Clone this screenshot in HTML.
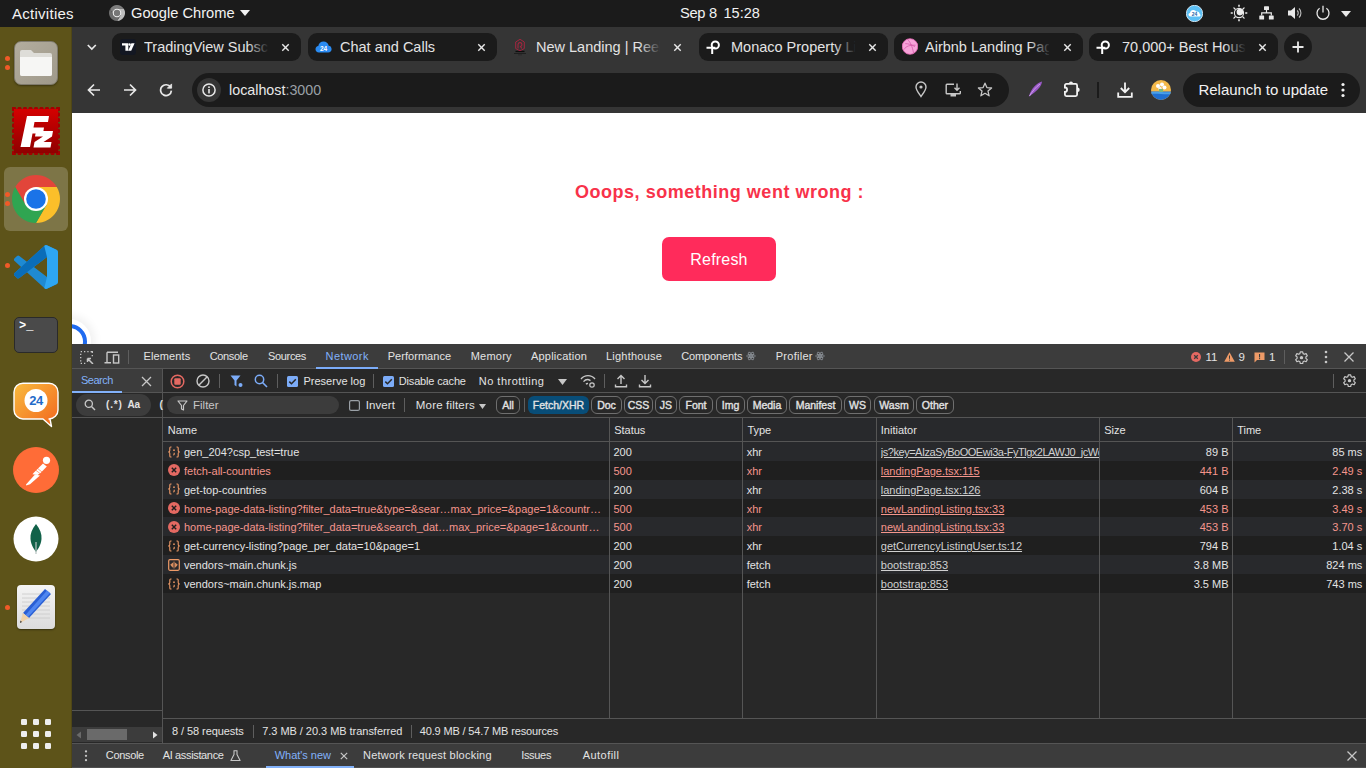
<!DOCTYPE html>
<html><head><meta charset="utf-8">
<style>
*{box-sizing:border-box;margin:0;padding:0}
html,body{width:1366px;height:768px;overflow:hidden;background:#1b1b1b;font-family:"Liberation Sans",sans-serif}
.a{position:absolute}
.t{position:absolute;white-space:nowrap}
#top{left:0;top:0;width:1366px;height:27px;background:#1b1b1b;color:#f2f2f2;font-size:15px}
#dock{left:0;top:27px;width:72px;height:741px;background:#5d5319}
#tabs{left:72px;top:27px;width:1294px;height:46px;background:#353535}
.tab{position:absolute;top:6px;height:28px;width:189px;border-radius:9px;background:#1b1b1b;color:#e3e3e3;font-size:14.5px}
.tab .tt{position:absolute;left:31px;top:6px;white-space:nowrap;overflow:hidden;width:124px}
.tab .fade{position:absolute;left:135px;top:0;width:22px;height:28px;background:linear-gradient(90deg,rgba(27,27,27,0),#1b1b1b)}
.tab .x{position:absolute;left:168px;top:8.5px;width:11px;height:11px}
#toolbar{left:72px;top:72px;width:1294px;height:41px;background:#353535}
#page{left:72px;top:113px;width:1294px;height:231px;background:#fff;overflow:hidden}
#dt{left:72px;top:344px;width:1294px;height:424px;background:#282828;color:#e3e3e3;font-size:11px;overflow:hidden}
</style></head>
<body>
<!-- Ubuntu top bar -->
<div id="top" class="a">
  <div class="t" style="left:12px;top:5px;letter-spacing:0.27px">Activities</div>
  <svg class="a" style="left:109px;top:5px" width="16" height="16" viewBox="-8 -8 16 16"><path d="M-6.75 -4.30A8 8 0 0 1 6.75 -4.30L0.00 -4.30L0 0L-3.72 2.15Z" fill="#7d7d7d"/><path d="M6.75 -4.30A8 8 0 0 1 0.00 8.00L3.72 2.15L0 0L0.00 -4.30Z" fill="#bdbdbd"/><path d="M0.00 8.00A8 8 0 0 1 -6.75 -4.30L-3.72 2.15L0 0L3.72 2.15Z" fill="#6c6c6c"/><circle r="4.3" fill="#f0f0f0"/><circle r="3.2" fill="#767676"/></svg>
  <div class="t" style="left:131px;top:5px;font-size:14.7px">Google Chrome</div>
  <svg class="a" style="left:240px;top:10px" width="10" height="6" viewBox="0 0 10 6"><path d="M0 0H10L5 6Z" fill="#f2f2f2"/></svg>
  <div class="t" style="left:680px;top:5px;font-size:14.7px;letter-spacing:-0.3px">Sep 8</div><div class="t" style="left:723.5px;top:4.5px;font-size:14.5px;letter-spacing:0px">15:28</div>
  <svg class="a" style="left:1186px;top:5px" width="17" height="17" viewBox="0 0 17 17"><circle cx="8.5" cy="8.5" r="8.2" fill="#5cc0f5"/><circle cx="8.5" cy="8.5" r="8.2" fill="none" stroke="#e8f6ff" stroke-width="0.8"/><path d="M4.5 11.5C3.2 11.5 2.5 10.6 2.5 9.6C2.5 8.7 3.1 8 4 7.9C4.2 6.2 5.6 5 7.3 5C8.6 5 9.7 5.7 10.2 6.8C10.5 6.7 10.8 6.6 11.2 6.6C12.6 6.6 13.6 7.6 13.7 8.9C14.2 9.1 14.5 9.6 14.5 10.2C14.5 11 13.9 11.5 13 11.5Z" fill="#fff"/><text x="8.5" y="10.6" font-size="5" font-weight="700" fill="#1a5fa8" text-anchor="middle" font-family="Liberation Sans">24</text></svg>
  <svg class="a" style="left:1230px;top:4px" width="18" height="18" viewBox="-1 -1 18 18"><g stroke="#e8e8e8" stroke-width="1.3"><path d="M8 -0.3V1.8M8 14.2V16.3M-0.3 8H1.8M14.2 8H16.3" stroke-width="1.6"/><path d="M2.9 2.9L4 4M12 12L13.1 13.1M2.9 13.1L4 12M12 4L13.1 2.9" stroke-linecap="round"/></g><circle cx="8" cy="8" r="4.6" stroke="#e8e8e8" stroke-width="1.1" fill="none"/><circle cx="8.9" cy="7.1" r="3.3" fill="#ececec"/></svg>
  <svg class="a" style="left:1259px;top:5.5px" width="15" height="14" viewBox="0 0 15 14"><rect x="5" y="0.3" width="5" height="3.7" rx="0.6" fill="#e8e8e8"/><rect x="0.3" y="9.5" width="4.8" height="4" rx="0.6" fill="#e8e8e8"/><rect x="9.9" y="9.5" width="4.8" height="4" rx="0.6" fill="#e8e8e8"/><path d="M7.5 4V6.8M2.7 9.5V6.8H12.3V9.5" stroke="#e8e8e8" stroke-width="1.2" fill="none"/></svg>
  <svg class="a" style="left:1287px;top:4.5px" width="16" height="16" viewBox="0 0 16 16"><path d="M1 5.5H4L8 2V14L4 10.5H1Z" fill="#e8e8e8"/><path d="M10.2 5.5A3.5 3.5 0 0 1 10.2 10.5M12 3.5A6.2 6.2 0 0 1 12 12.5" stroke="#e8e8e8" stroke-width="1.1" fill="none" opacity="0.8"/></svg>
  <svg class="a" style="left:1315px;top:4.5px" width="16" height="16" viewBox="0 0 16 16"><path d="M4.6 3.3A6 6 0 1 0 11.4 3.3" stroke="#e8e8e8" stroke-width="1.3" fill="none"/><path d="M8 0.8V7.5" stroke="#e8e8e8" stroke-width="1.3"/></svg>
  <svg class="a" style="left:1341px;top:11px" width="10" height="6" viewBox="0 0 10 6"><path d="M0 0H10L5 6Z" fill="#e8e8e8"/></svg>
</div>
<div id="dock" class="a">
  <!-- files -->
  <div class="a" style="left:5px;top:29px;width:5px;height:5px;border-radius:3px;background:#f05a28"></div>
  <div class="a" style="left:5px;top:38px;width:5px;height:5px;border-radius:3px;background:#f05a28"></div>
  <div class="a" style="left:14px;top:14px;width:44px;height:44px;border-radius:7px;background:linear-gradient(135deg,#b3ad9e,#9f998a);border:1px solid #7f7a6c;box-shadow:0 1px 2px rgba(0,0,0,.35)"></div>
  <svg class="a" style="left:19px;top:22px" width="34" height="28" viewBox="0 0 34 28"><path d="M1 3A2 2 0 0 1 3 1H12L15 4H31A2 2 0 0 1 33 6V25A2 2 0 0 1 31 27H3A2 2 0 0 1 1 25Z" fill="#deddd8"/><path d="M1 8H33V25A2 2 0 0 1 31 27H3A2 2 0 0 1 1 25Z" fill="#f6f6f4"/></svg>
  <!-- filezilla -->
  <svg class="a" style="left:12px;top:80px" width="48" height="48" viewBox="0 0 48 48"><defs><linearGradient id="fzg" x1="0" y1="0" x2="0" y2="1"><stop offset="0" stop-color="#d40000"/><stop offset="1" stop-color="#8f0000"/></linearGradient></defs><g fill="#a30000"><circle cx="2.0" cy="2" r="2.2"/><circle cx="2.0" cy="46" r="2.2"/><circle cx="2" cy="2.0" r="2.2"/><circle cx="46" cy="2.0" r="2.2"/><circle cx="7.5" cy="2" r="2.2"/><circle cx="7.5" cy="46" r="2.2"/><circle cx="2" cy="7.5" r="2.2"/><circle cx="46" cy="7.5" r="2.2"/><circle cx="13.0" cy="2" r="2.2"/><circle cx="13.0" cy="46" r="2.2"/><circle cx="2" cy="13.0" r="2.2"/><circle cx="46" cy="13.0" r="2.2"/><circle cx="18.5" cy="2" r="2.2"/><circle cx="18.5" cy="46" r="2.2"/><circle cx="2" cy="18.5" r="2.2"/><circle cx="46" cy="18.5" r="2.2"/><circle cx="24.0" cy="2" r="2.2"/><circle cx="24.0" cy="46" r="2.2"/><circle cx="2" cy="24.0" r="2.2"/><circle cx="46" cy="24.0" r="2.2"/><circle cx="29.5" cy="2" r="2.2"/><circle cx="29.5" cy="46" r="2.2"/><circle cx="2" cy="29.5" r="2.2"/><circle cx="46" cy="29.5" r="2.2"/><circle cx="35.0" cy="2" r="2.2"/><circle cx="35.0" cy="46" r="2.2"/><circle cx="2" cy="35.0" r="2.2"/><circle cx="46" cy="35.0" r="2.2"/><circle cx="40.5" cy="2" r="2.2"/><circle cx="40.5" cy="46" r="2.2"/><circle cx="2" cy="40.5" r="2.2"/><circle cx="46" cy="40.5" r="2.2"/><circle cx="46.0" cy="2" r="2.2"/><circle cx="46.0" cy="46" r="2.2"/><circle cx="2" cy="46.0" r="2.2"/><circle cx="46" cy="46.0" r="2.2"/></g><rect x="2" y="2" width="44" height="44" fill="url(#fzg)"/><path d="M15 9H37L36 15H22.5L21.5 20.5H32L31 26.5H20.5L18 40H8.5Z" fill="#fff"/><path d="M24 24H41L40 29.5L31.5 35H39.5L38.5 40.5H21.5L22.5 35L31 29.5H23Z" fill="#fff"/></svg>
  <!-- chrome -->
  <div class="a" style="left:4px;top:140px;width:64px;height:64px;border-radius:6px;background:rgba(255,255,255,0.2)"></div>
  <div class="a" style="left:5px;top:165px;width:5px;height:5px;border-radius:3px;background:#f05a28"></div>
  <div class="a" style="left:5px;top:174px;width:5px;height:5px;border-radius:3px;background:#f05a28"></div>
  <svg class="a" style="left:12px;top:148px" width="48" height="48" viewBox="-24 -24 48 48"><path d="M-20.78 -12.00A24 24 0 0 1 20.78 -12.00L0.00 -12.00L0 0L-10.39 6.00Z" fill="#e2453a"/><path d="M20.78 -12.00A24 24 0 0 1 0.00 24.00L10.39 6.00L0 0L0.00 -12.00Z" fill="#fbbf2a"/><path d="M0.00 24.00A24 24 0 0 1 -20.78 -12.00L-10.39 6.00L0 0L10.39 6.00Z" fill="#2fa551"/><circle r="12" fill="#fff"/><circle r="9.8" fill="#1a73e8"/></svg>
  <!-- vscode -->
  <div class="a" style="left:5px;top:236px;width:5px;height:5px;border-radius:3px;background:#f05a28"></div>
  <svg class="a" style="left:14px;top:218px" width="44" height="44" viewBox="0 0 100 100"><path d="M96.46 10.8L75.86.87a6.23 6.23 0 0 0-7.1 1.21L29.35 38.04 12.18 25.01a4.16 4.16 0 0 0-5.32.24L1.36 30.25a4.16 4.16 0 0 0 0 6.16L16.25 50 1.36 63.59a4.16 4.16 0 0 0 0 6.16l5.5 5a4.16 4.16 0 0 0 5.32.24l17.17-13.03 39.41 35.96a6.23 6.23 0 0 0 7.1 1.21l20.6-9.92A6.24 6.24 0 0 0 100 83.76V16.24a6.24 6.24 0 0 0-3.54-5.44zM75 72.7L45.1 50 75 27.3z" fill="#1f8ad2"/><path d="M1.36 63.59L68.76 2.08L75.86.87L75 27.3L12.18 75a4.16 4.16 0 0 1-5.32-.24l-5.5-5a4.16 4.16 0 0 1 0-6.16z" fill="#0a6db8"/><path d="M75.86.87L96.46 10.8A6.24 6.24 0 0 1 100 16.24V83.76A6.24 6.24 0 0 1 96.46 89.2L75.86 99.13A6.23 6.23 0 0 1 68.76 97.92L75 72.7V27.3L68.76 2.08A6.23 6.23 0 0 1 75.86.87z" fill="#2ea6f2"/></svg>
  <!-- terminal -->
  <div class="a" style="left:14px;top:290px;width:44px;height:36px;border-radius:5px;background:#4a4a4a;border:1px solid #2a2a2a"></div>
  <div class="t" style="left:19px;top:292px;font-family:'Liberation Mono';font-size:12px;color:#fff;font-weight:700">&gt;_</div>
  <!-- bitrix24 -->
  <svg class="a" style="left:13px;top:355px" width="46" height="46" viewBox="0 0 46 46"><defs><linearGradient id="bxg" x1="0" y1="0" x2="1" y2="1"><stop offset="0" stop-color="#f9bb3d"/><stop offset="1" stop-color="#f2661e"/></linearGradient></defs><path d="M10 1.2H36A9 9 0 0 1 45 10.2V28A9 9 0 0 1 36 37H37L38.5 44.5L30 37H10A9 9 0 0 1 1 28V10.2A9 9 0 0 1 10 1.2Z" fill="url(#bxg)" stroke="#fff" stroke-width="1.4" stroke-linejoin="round"/><circle cx="23" cy="18.5" r="11.5" fill="#fff"/><text x="23" y="23.2" font-size="13" font-weight="700" fill="#1f6bc9" text-anchor="middle" font-family="Liberation Sans" letter-spacing="-0.5">24</text></svg>
  <!-- postman -->
  <svg class="a" style="left:13px;top:420px" width="46" height="46" viewBox="0 0 46 46"><circle cx="23" cy="23" r="23" fill="#f4693a"/><circle cx="23" cy="23" r="22.5" fill="#ff6c37"/><circle cx="33.5" cy="13.3" r="3.6" fill="#fff"/><path d="M30 16.5L33.8 19.5L27.5 26L24.5 28L19.5 27.2L21 25.5Z" fill="#fff"/><path d="M22 27.5L27 28.5L17 37.3L13.3 38.6L13 37.5Z" fill="#fff"/><path d="M24 21L29 25M22.5 23L27 26.5" stroke="#ff6c37" stroke-width="0.6"/></svg>
  <!-- mongo -->
  <svg class="a" style="left:13px;top:489px" width="46" height="46" viewBox="0 0 46 46"><circle cx="23" cy="23" r="22.5" fill="#fff"/><path d="M23 8C27 13 29 18 28.5 23C28 29 25 33 23 36C21 33 18 29 17.5 23C17 18 19 13 23 8Z" fill="#116149"/><rect x="22.4" y="26" width="1.2" height="12" fill="#b8c4c2"/></svg>
  <!-- gedit -->
  <div class="a" style="left:5px;top:578px;width:5px;height:5px;border-radius:3px;background:#f05a28"></div>
  <div class="a" style="left:17px;top:558px;width:38px;height:44px;border-radius:4px;background:linear-gradient(#f4f4f4,#dcdcdc);box-shadow:0 1px 2px rgba(0,0,0,.4)"></div>
  <svg class="a" style="left:17px;top:558px" width="38" height="44" viewBox="0 0 38 44"><path d="M5 9H33M5 13H33M5 17H33M5 21H33M5 25H33M5 29H33M5 33H33" stroke="#c9c9c9" stroke-width="0.8"/><path d="M28 4L34 9L12 33L6 28Z" fill="#2a5fd4"/><path d="M30 5.5L33 8L11 32L8.5 30Z" fill="#4f86f0"/><path d="M6 28L12 33L3 38Z" fill="#f0d2a8"/><path d="M3.5 35.5L5 37L3 38Z" fill="#333"/></svg>
  <div class="a" style="left:71px;top:0;width:1px;height:741px;background:#4f4616"></div>
  <!-- apps grid -->
  <svg class="a" style="left:20px;top:691px" width="32" height="32" viewBox="0 0 32 32"><g fill="#eeeeee"><rect x="1" y="1" width="6" height="6" rx="1.2"/><rect x="13" y="1" width="6" height="6" rx="1.2"/><rect x="25" y="1" width="6" height="6" rx="1.2"/><rect x="1" y="13" width="6" height="6" rx="1.2"/><rect x="13" y="13" width="6" height="6" rx="1.2"/><rect x="25" y="13" width="6" height="6" rx="1.2"/><rect x="1" y="25" width="6" height="6" rx="1.2"/><rect x="13" y="25" width="6" height="6" rx="1.2"/><rect x="25" y="25" width="6" height="6" rx="1.2"/></g></svg>
</div>
<div id="tabs" class="a">
  <svg class="a" style="left:13px;top:16px" width="12" height="8" viewBox="0 0 12 8"><path d="M2.8 2L6.8 6L10.8 2" stroke="#e8e8e8" stroke-width="1.7" fill="none"/></svg>
  <div class="tab" style="left:40px"><svg class="a" style="left:8px;top:6px" width="16" height="16" viewBox="0 0 16 16"><rect width="16" height="16" rx="3" fill="#131722"/><path d="M2 4.3H8.3V11.8H5.4V6.6H2Z" fill="#fff"/><circle cx="9.6" cy="5.5" r="1.2" fill="#fff"/><path d="M11.4 4.3H14.6L11.2 11.8H8.2Z" fill="#fff"/></svg><div class="tt" style="left:32px">TradingView Subscription</div><div class="fade"></div><svg class="x" viewBox="0 0 14 14"><path d="M2.9 2.9L11.1 11.1M11.1 2.9L2.9 11.1" stroke="#e8e8e8" stroke-width="1.8"/></svg></div>
  <div class="tab" style="left:236px"><svg class="a" style="left:7.3px;top:6px" width="17" height="16" viewBox="0 0 17 16"><path d="M4 13.5C1.8 13.5 0.5 12 0.5 10.2C0.5 8.5 1.7 7.2 3.3 7C3.6 4.3 5.8 2.5 8.5 2.5C11.2 2.5 13.3 4.3 13.7 6.8C15.5 7 16.6 8.4 16.6 10.2C16.6 12.1 15.2 13.5 13.2 13.5Z" fill="#2a8bf2"/><text x="8.5" y="11.6" font-size="6.5" font-weight="700" fill="#fff" text-anchor="middle" font-family="Liberation Sans">24</text></svg><div class="tt" style="left:32px">Chat and Calls</div><svg class="x" viewBox="0 0 14 14"><path d="M2.9 2.9L11.1 11.1M11.1 2.9L2.9 11.1" stroke="#e8e8e8" stroke-width="1.8"/></svg></div>
  <div class="tab" style="left:432px;background:transparent"><svg class="a" style="left:7px;top:5px" width="18" height="20" viewBox="0 0 18 20"><path d="M9 1.3L13.3 4V10.5L9 13L4.7 10.5V4Z" stroke="#a3263f" stroke-width="1" fill="none" stroke-linejoin="round"/><path d="M7 10.5V6.3A2 2 0 1 1 9.5 8.6L10.8 10.5" stroke="#a3263f" stroke-width="1.1" fill="none"/><path d="M9 11.5L10 13.3H8Z" fill="#d81b55"/><rect x="4.5" y="12.8" width="9" height="1.3" fill="#0d0d0d"/><rect x="3" y="15" width="12" height="0.9" fill="#1e1e1e"/><rect x="7" y="16.6" width="4" height="0.6" fill="#222"/></svg><div class="tt" style="left:32px">New Landing | Reeltor</div><div class="fade" style="background:linear-gradient(90deg,rgba(53,53,53,0),#353535)"></div><svg class="x" viewBox="0 0 14 14"><path d="M2.9 2.9L11.1 11.1M11.1 2.9L2.9 11.1" stroke="#e8e8e8" stroke-width="1.8"/></svg></div>
  <div class="tab" style="left:627px"><svg class="a" style="left:7px;top:7px" width="15" height="15" viewBox="0 0 15 15"><circle cx="9.3" cy="5" r="3.6" stroke="#fff" stroke-width="2" fill="none"/><path d="M0.5 7.8H9.3M6.2 7.8V14" stroke="#fff" stroke-width="2" fill="none"/></svg><div class="tt" style="left:32px">Monaco Property Listing</div><div class="fade"></div><svg class="x" viewBox="0 0 14 14"><path d="M2.9 2.9L11.1 11.1M11.1 2.9L2.9 11.1" stroke="#e8e8e8" stroke-width="1.8"/></svg></div>
  <div class="tab" style="left:822px"><svg class="a" style="left:8px;top:5px" width="16" height="17" viewBox="0 0 16 17"><circle cx="8" cy="8.5" r="7.8" fill="#f7a3d9" stroke="#e86ab8" stroke-width="0.8"/><path d="M3.2 5.7C6 5.5 9 6.5 13 8.6M5.5 1.5C8.5 4 10.5 9 11.5 15M2 11.5C4 8 8 7 13.6 7.2" stroke="#d45aa8" stroke-width="0.8" fill="none"/></svg><div class="tt">Airbnb Landing Page</div><div class="fade"></div><svg class="x" viewBox="0 0 14 14"><path d="M2.9 2.9L11.1 11.1M11.1 2.9L2.9 11.1" stroke="#e8e8e8" stroke-width="1.8"/></svg></div>
  <div class="tab" style="left:1017px"><svg class="a" style="left:7px;top:7px" width="15" height="15" viewBox="0 0 15 15"><circle cx="9.3" cy="5" r="3.6" stroke="#fff" stroke-width="2" fill="none"/><path d="M0.5 7.8H9.3M6.2 7.8V14" stroke="#fff" stroke-width="2" fill="none"/></svg><div class="tt" style="left:33px">70,000+ Best Houses</div><div class="fade"></div><svg class="x" viewBox="0 0 14 14"><path d="M2.9 2.9L11.1 11.1M11.1 2.9L2.9 11.1" stroke="#e8e8e8" stroke-width="1.8"/></svg></div>
  <div class="a" style="left:1212px;top:6px;width:28px;height:28px;border-radius:14px;background:#1b1b1b"><svg class="a" style="left:7px;top:7px" width="14" height="14" viewBox="0 0 14 14"><path d="M7 1.5V12.5M1.5 7H12.5" stroke="#e8e8e8" stroke-width="1.8"/></svg></div>
</div>
<div id="toolbar" class="a">
  <svg class="a" style="left:15px;top:11px" width="14" height="14" viewBox="0 0 14 14"><path d="M13 7H2M7 1.5L1.5 7L7 12.5" stroke="#e8e8e8" stroke-width="1.7" fill="none"/></svg>
  <svg class="a" style="left:51px;top:11px" width="14" height="14" viewBox="0 0 14 14"><path d="M1 7H12M7 1.5L12.5 7L7 12.5" stroke="#e8e8e8" stroke-width="1.7" fill="none"/></svg>
  <svg class="a" style="left:87px;top:11px" width="14" height="14" viewBox="0 0 14 14"><path d="M11.6 4.3A5.4 5.4 0 1 0 12.4 7.6" stroke="#e8e8e8" stroke-width="1.7" fill="none"/><path d="M8.3 5.2H12.6V0.9Z" fill="#e8e8e8" stroke="#e8e8e8" stroke-width="0.8"/></svg>
  <div class="a" style="left:120px;top:1px;width:817px;height:34px;border-radius:17px;background:#1b1b1b"></div>
  <div class="a" style="left:125px;top:6px;width:24px;height:24px;border-radius:12px;background:#353535"></div>
  <svg class="a" style="left:130px;top:11px" width="14" height="14" viewBox="0 0 14 14"><circle cx="7" cy="7" r="6.1" stroke="#e8e8e8" stroke-width="1.5" fill="none"/><rect x="6.2" y="6" width="1.6" height="4.4" fill="#e8e8e8"/><rect x="6.2" y="3.4" width="1.6" height="1.6" fill="#e8e8e8"/></svg>
  <div class="t" style="left:157px;top:10px;font-size:14.3px;color:#e8e8e8">localhost<span style="color:#9aa0a6">:3000</span></div>
  <svg class="a" style="left:843px;top:9px" width="12" height="17" viewBox="0 0 12 17"><path d="M6 15.5C3.5 12 1 9 1 6A5 5 0 0 1 11 6C11 9 8.5 12 6 15.5Z" stroke="#c7c7c7" stroke-width="1.4" fill="none"/><circle cx="6" cy="6" r="1.6" fill="#c7c7c7"/></svg>
  <svg class="a" style="left:873px;top:11px" width="17" height="15" viewBox="0 0 17 15"><path d="M9 1.2H2A1 1 0 0 0 1.2 2V10A1 1 0 0 0 2 10.8H14.5A1 1 0 0 0 15.3 10V8" stroke="#c7c7c7" stroke-width="1.4" fill="none"/><rect x="5.5" y="11" width="5.5" height="2.5" fill="#c7c7c7"/><path d="M12 0.5V7M9.5 4.8L12 7.2L14.5 4.8" stroke="#c7c7c7" stroke-width="1.4" fill="none"/></svg>
  <svg class="a" style="left:905px;top:10px" width="16" height="15" viewBox="0 0 16 15"><path d="M8 1.2L9.9 5.6L14.6 6L11 9.1L12.1 13.8L8 11.3L3.9 13.8L5 9.1L1.4 6L6.1 5.6Z" stroke="#c7c7c7" stroke-width="1.3" fill="none" stroke-linejoin="round"/></svg>
  <svg class="a" style="left:956px;top:9px" width="15" height="17" viewBox="0 0 15 17"><path d="M14 0.5C9 2 3 7 0.8 15.8C4 13 9 10 11.5 6.5C13 4.5 13.8 2.5 14 0.5Z" fill="#9b59c9"/><path d="M12 3C8 6 4.5 10 1.5 15" stroke="#d9b3f0" stroke-width="0.8" fill="none"/></svg>
  <svg class="a" style="left:991px;top:8px" width="18" height="18" viewBox="0 0 18 18"><path d="M3.4 3.9H12.6A1.5 1.5 0 0 1 14.1 5.4V14.6A1.5 1.5 0 0 1 12.6 16.1H3.4A1.5 1.5 0 0 1 1.9 14.6V11.9A2.2 2.2 0 0 0 1.9 7.5V5.4A1.5 1.5 0 0 1 3.4 3.9Z" stroke="#f2f2f2" stroke-width="1.8" fill="none"/><path d="M6 3.5A2 2 0 0 1 10 3.5Z" fill="#f2f2f2"/><path d="M14.5 7.5A2.2 2.2 0 0 1 14.5 11.9Z" fill="#f2f2f2"/></svg>
  <div class="a" style="left:1025px;top:10px;width:2px;height:16px;background:#1b1b1b"></div>
  <svg class="a" style="left:1045px;top:10px" width="16" height="16" viewBox="0 0 16 16"><path d="M8 0.5V10M3.8 6L8 10.2L12.2 6" stroke="#f2f2f2" stroke-width="1.8" fill="none"/><path d="M1.2 10.5V14.8H14.8V10.5" stroke="#f2f2f2" stroke-width="1.8" fill="none"/></svg>
  <svg class="a" style="left:1079px;top:8px" width="20" height="20" viewBox="0 0 20 20"><defs><clipPath id="av"><circle cx="10" cy="10" r="10"/></clipPath></defs><g clip-path="url(#av)"><rect width="20" height="20" fill="#f4b94a"/><rect y="11.5" width="20" height="9" fill="#1f6fd1"/><path d="M0 12C5 11 15 13 20 12V14C15 15 5 13 0 14Z" fill="#4aa0e8"/><circle cx="7" cy="6" r="2" fill="#fff"/><circle cx="11" cy="4.5" r="2" fill="#fff"/><circle cx="13.5" cy="7.5" r="2" fill="#fff"/><circle cx="9" cy="8.5" r="1.7" fill="#f2f2f2"/><rect x="8" y="9" width="4" height="3" fill="#7ab87a"/></g></svg>
  <div class="a" style="left:1111px;top:1px;width:177px;height:34px;border-radius:17px;background:#1b1b1b"></div>
  <div class="t" style="left:1126.5px;top:9px;font-size:15px;color:#f2f2f2;letter-spacing:-0.03px">Relaunch to update</div>
  <svg class="a" style="left:1268px;top:10px" width="6" height="16" viewBox="0 0 6 16"><circle cx="3" cy="2.5" r="1.6" fill="#f2f2f2"/><circle cx="3" cy="8" r="1.6" fill="#f2f2f2"/><circle cx="3" cy="13.5" r="1.6" fill="#f2f2f2"/></svg>
</div>
<div id="page" class="a">
  <div class="a" style="left:-25px;top:206px;width:44px;height:44px;border-radius:22px;box-shadow:0 0 8px 4px rgba(0,0,0,0.06)"></div>
  <div class="a" style="left:-20px;top:211px;width:35px;height:35px;border-radius:18px;border:4px solid #1f6bf0;background:#fff"></div>
  <div class="t" style="left:503px;top:68.5px;font-size:18px;font-weight:700;color:#f8324a;letter-spacing:0.52px">Ooops, something went wrong :</div>
  <div class="a" style="left:590px;top:124px;width:114px;height:44px;border-radius:7px;background:#ff2b5b;color:#fff;font-size:16px;text-align:center;line-height:45px;letter-spacing:0.2px">Refresh</div>
</div>
<div id="dt" class="a">
<div class="a" style="left:0.0px;top:0.0px;width:1294px;height:24px;background:#3c3c3c;"></div>
<div class="a" style="left:0.0px;top:24.0px;width:1294px;height:1px;background:#555555;"></div>
<svg class="a" style="left:8.0px;top:7.0px" width="14" height="13" viewBox="0 0 14 13"><path d="M0.7 0.7H2M4 0.7H5.3M7.3 0.7H8.6M10.6 0.7H12.3V2M12.3 4V5.3M0.7 2.7V4M0.7 6V7.3M0.7 9.3V10.6M0.7 12.3H2M4 12.3H5.3" stroke="#c7c7c7" stroke-width="1.3" fill="none"/><path d="M7.5 7.5L13 13M7.5 7.5V11M7.5 7.5H11" stroke="#c7c7c7" stroke-width="1.5" fill="none"/></svg>
<svg class="a" style="left:32.0px;top:7.0px" width="16" height="13" viewBox="0 0 16 13"><path d="M3 1.2H14M3 1.2V11M0.5 11.8H7" stroke="#c7c7c7" stroke-width="1.4" fill="none"/><rect x="9.5" y="4" width="5.2" height="8" stroke="#c7c7c7" stroke-width="1.4" fill="none"/></svg>
<div class="a" style="left:56.0px;top:6.0px;width:1px;height:14px;background:#5e5e5e;"></div>
<div class="t" style="left:71.6px;top:5.6px;font-size:11px;color:#e3e3e3;font-weight:400;line-height:normal;letter-spacing:0.114px;">Elements</div>
<div class="t" style="left:137.7px;top:5.6px;font-size:11px;color:#e3e3e3;font-weight:400;line-height:normal;letter-spacing:-0.333px;">Console</div>
<div class="t" style="left:196.0px;top:5.6px;font-size:11px;color:#e3e3e3;font-weight:400;line-height:normal;letter-spacing:-0.333px;">Sources</div>
<div class="t" style="left:253.5px;top:5.6px;font-size:11px;color:#82b1f9;font-weight:400;line-height:normal;letter-spacing:0.433px;">Network</div>
<div class="t" style="left:315.7px;top:5.6px;font-size:11px;color:#e3e3e3;font-weight:400;line-height:normal;letter-spacing:0.040px;">Performance</div>
<div class="t" style="left:398.7px;top:5.6px;font-size:11px;color:#e3e3e3;font-weight:400;line-height:normal;letter-spacing:0.240px;">Memory</div>
<div class="t" style="left:459.0px;top:5.6px;font-size:11px;color:#e3e3e3;font-weight:400;line-height:normal;letter-spacing:0.200px;">Application</div>
<div class="t" style="left:534.0px;top:5.6px;font-size:11px;color:#e3e3e3;font-weight:400;line-height:normal;letter-spacing:0.222px;">Lighthouse</div>
<div class="t" style="left:609.3px;top:5.6px;font-size:11px;color:#e3e3e3;font-weight:400;line-height:normal;letter-spacing:-0.133px;">Components</div>
<div class="t" style="left:703.7px;top:5.6px;font-size:11px;color:#e3e3e3;font-weight:400;line-height:normal;letter-spacing:0.286px;">Profiler</div>
<div class="a" style="left:244.0px;top:23.0px;width:62px;height:2px;background:#7cacf8;"></div>
<svg class="a" style="left:674.0px;top:7.0px" width="10" height="10" viewBox="0 0 10 10"><g stroke="#8f959c" stroke-width="0.75" fill="none"><ellipse cx="5" cy="5" rx="4.4" ry="1.6"/><ellipse cx="5" cy="5" rx="4.4" ry="1.6" transform="rotate(60 5 5)"/><ellipse cx="5" cy="5" rx="4.4" ry="1.6" transform="rotate(-60 5 5)"/></g><circle cx="5" cy="5" r="1" fill="#8f959c"/></svg>
<svg class="a" style="left:743.0px;top:7.0px" width="10" height="10" viewBox="0 0 10 10"><g stroke="#8f959c" stroke-width="0.75" fill="none"><ellipse cx="5" cy="5" rx="4.4" ry="1.6"/><ellipse cx="5" cy="5" rx="4.4" ry="1.6" transform="rotate(60 5 5)"/><ellipse cx="5" cy="5" rx="4.4" ry="1.6" transform="rotate(-60 5 5)"/></g><circle cx="5" cy="5" r="1" fill="#8f959c"/></svg>
<svg class="a" style="left:1119.0px;top:8.0px" width="10" height="10" viewBox="0 0 10 10"><circle cx="5" cy="5" r="5" fill="#e46962"/><path d="M3.2 3.2L6.8 6.8M6.8 3.2L3.2 6.8" stroke="#3c3c3c" stroke-width="1.3"/></svg>
<div class="t" style="left:1133.5px;top:6.6px;font-size:11.5px;color:#e3e3e3;font-weight:400;line-height:normal;">11</div>
<svg class="a" style="left:1152.0px;top:8.0px" width="11" height="10" viewBox="0 0 11 10"><path d="M5.5 0.3L10.8 9.7H0.2Z" fill="#ee9a67"/><rect x="5" y="3.5" width="1" height="3.3" fill="#3c3c3c"/><rect x="5" y="7.6" width="1" height="1" fill="#3c3c3c"/></svg>
<div class="t" style="left:1166.5px;top:6.6px;font-size:11.5px;color:#e3e3e3;font-weight:400;line-height:normal;">9</div>
<svg class="a" style="left:1182.0px;top:8.0px" width="11" height="11" viewBox="0 0 11 11"><path d="M0.5 0.5H10.5V8H3L0.5 10.5Z" fill="#ee9a67"/><rect x="5" y="2" width="1.1" height="3.5" fill="#3c3c3c"/><rect x="5" y="6.1" width="1.1" height="1.1" fill="#3c3c3c"/></svg>
<div class="t" style="left:1197.0px;top:6.6px;font-size:11.5px;color:#e3e3e3;font-weight:400;line-height:normal;">1</div>
<div class="a" style="left:1212.0px;top:6.0px;width:1px;height:14px;background:#5e5e5e;"></div>
<svg class="a" style="left:1221.5px;top:6.5px" width="15" height="13.3" viewBox="0 0 15 13.3"><path d="M6.3 0.8H8.7L9.1 2.6L10.4 3.3L12.1 2.6L13.3 4.7L11.9 5.9V7.4L13.3 8.6L12.1 10.7L10.4 10L9.1 10.7L8.7 12.5H6.3L5.9 10.7L4.6 10L2.9 10.7L1.7 8.6L3.1 7.4V5.9L1.7 4.7L2.9 2.6L4.6 3.3L5.9 2.6Z" stroke="#c7c7c7" stroke-width="1.2" fill="none" stroke-linejoin="round"/><circle cx="7.5" cy="6.65" r="1.7" fill="#c7c7c7"/></svg>
<svg class="a" style="left:1251.0px;top:6.0px" width="6" height="14" viewBox="0 0 6 14"><circle cx="3" cy="2" r="1.3" fill="#c7c7c7"/><circle cx="3" cy="7" r="1.3" fill="#c7c7c7"/><circle cx="3" cy="12" r="1.3" fill="#c7c7c7"/></svg>
<svg class="a" style="left:1271.0px;top:7.0px" width="12" height="12" viewBox="0 0 12 12"><path d="M1.5 1.5L10.5 10.5M10.5 1.5L1.5 10.5" stroke="#c7c7c7" stroke-width="1.3"/></svg>
<div class="a" style="left:0.0px;top:25.0px;width:1294px;height:23px;background:#282828;"></div>
<div class="a" style="left:0.0px;top:48.0px;width:1294px;height:1px;background:#555555;"></div>
<div class="a" style="left:0.0px;top:25.0px;width:90px;height:23px;background:#3c3c3c;"></div>
<div class="t" style="left:8.9px;top:30.3px;font-size:11px;color:#82b1f9;font-weight:400;line-height:normal;letter-spacing:-0.480px;">Search</div>
<div class="a" style="left:0.0px;top:47.0px;width:50px;height:2px;background:#82b1f9;"></div>
<svg class="a" style="left:69.0px;top:32.0px" width="11" height="11" viewBox="0 0 11 11"><path d="M1 1L10 10M10 1L1 10" stroke="#c7c7c7" stroke-width="1.3"/></svg>
<div class="a" style="left:90.0px;top:25.0px;width:1px;height:374px;background:#555555;"></div>
<svg class="a" style="left:97.5px;top:29.7px" width="15" height="15" viewBox="0 0 15 15"><circle cx="7.5" cy="7.5" r="6.3" stroke="#e46962" stroke-width="1.5" fill="none"/><rect x="4.3" y="4.3" width="6.4" height="6.4" rx="1" fill="#e46962"/></svg>
<svg class="a" style="left:124.0px;top:30.0px" width="14" height="14" viewBox="0 0 14 14"><circle cx="7" cy="7" r="6" stroke="#c7c7c7" stroke-width="1.4" fill="none"/><path d="M2.8 11.2L11.2 2.8" stroke="#c7c7c7" stroke-width="1.4"/></svg>
<div class="a" style="left:147.0px;top:30.0px;width:1px;height:14px;background:#5e5e5e;"></div>
<svg class="a" style="left:158.0px;top:31.0px" width="14" height="13" viewBox="0 0 14 13"><path d="M0.5 0.5H10.5L6.5 5.5V11.5L4.5 10V5.5Z" fill="#7cacf8"/><circle cx="10.5" cy="10" r="2" fill="#7cacf8"/></svg>
<svg class="a" style="left:182.0px;top:30.0px" width="14" height="14" viewBox="0 0 14 14"><circle cx="5.5" cy="5.5" r="4.2" stroke="#7cacf8" stroke-width="1.5" fill="none"/><path d="M8.5 8.5L13 13" stroke="#7cacf8" stroke-width="1.6"/></svg>
<div class="a" style="left:205.0px;top:30.0px;width:1px;height:14px;background:#5e5e5e;"></div>
<svg class="a" style="left:215.0px;top:32.0px" width="11" height="11" viewBox="0 0 11 11"><rect x="0" y="0" width="11" height="11" rx="1.5" fill="#7cacf8"/><path d="M2.3 5.6L4.5 7.8L8.8 3.3" stroke="#282828" stroke-width="1.5" fill="none"/></svg>
<div class="t" style="left:231.5px;top:31.0px;font-size:11px;color:#e3e3e3;font-weight:400;line-height:normal;letter-spacing:0.000px;">Preserve log</div>
<div class="a" style="left:301.0px;top:30.0px;width:1px;height:14px;background:#5e5e5e;"></div>
<svg class="a" style="left:311.0px;top:32.0px" width="11" height="11" viewBox="0 0 11 11"><rect x="0" y="0" width="11" height="11" rx="1.5" fill="#7cacf8"/><path d="M2.3 5.6L4.5 7.8L8.8 3.3" stroke="#282828" stroke-width="1.5" fill="none"/></svg>
<div class="t" style="left:326.7px;top:31.0px;font-size:11px;color:#e3e3e3;font-weight:400;line-height:normal;letter-spacing:-0.150px;">Disable cache</div>
<div class="t" style="left:406.8px;top:31.0px;font-size:11px;color:#e3e3e3;font-weight:400;line-height:normal;letter-spacing:0.483px;">No throttling</div>
<svg class="a" style="left:486.0px;top:35.0px" width="9" height="6" viewBox="0 0 9 6"><path d="M0 0H9L4.5 6Z" fill="#c7c7c7"/></svg>
<svg class="a" style="left:508.0px;top:30.0px" width="16" height="14" viewBox="0 0 16 14"><path d="M1 5A9 9 0 0 1 15 5M3.5 7.6A5.5 5.5 0 0 1 10.5 6.6M6 10.2A2 2 0 0 1 8 9.6" stroke="#c7c7c7" stroke-width="1.4" fill="none"/><circle cx="12" cy="11" r="2.2" stroke="#c7c7c7" stroke-width="1.2" fill="none"/></svg>
<div class="a" style="left:532.0px;top:30.0px;width:1px;height:14px;background:#5e5e5e;"></div>
<svg class="a" style="left:542.0px;top:30.0px" width="14" height="14" viewBox="0 0 14 14"><path d="M7 10V1.5M3.5 5L7 1.5L10.5 5" stroke="#c7c7c7" stroke-width="1.4" fill="none"/><path d="M1.5 10.5V12.8H12.5V10.5" stroke="#c7c7c7" stroke-width="1.4" fill="none"/></svg>
<svg class="a" style="left:566.0px;top:30.0px" width="14" height="14" viewBox="0 0 14 14"><path d="M7 1V9.5M3.5 6L7 9.5L10.5 6" stroke="#c7c7c7" stroke-width="1.4" fill="none"/><path d="M1.5 10.5V12.8H12.5V10.5" stroke="#c7c7c7" stroke-width="1.4" fill="none"/></svg>
<div class="a" style="left:1261.0px;top:30.0px;width:1px;height:14px;background:#5e5e5e;"></div>
<svg class="a" style="left:1269.5px;top:30.0px" width="15" height="13.3" viewBox="0 0 15 13.3"><path d="M6.3 0.8H8.7L9.1 2.6L10.4 3.3L12.1 2.6L13.3 4.7L11.9 5.9V7.4L13.3 8.6L12.1 10.7L10.4 10L9.1 10.7L8.7 12.5H6.3L5.9 10.7L4.6 10L2.9 10.7L1.7 8.6L3.1 7.4V5.9L1.7 4.7L2.9 2.6L4.6 3.3L5.9 2.6Z" stroke="#c7c7c7" stroke-width="1.2" fill="none" stroke-linejoin="round"/><circle cx="7.5" cy="6.65" r="1.7" fill="#c7c7c7"/></svg>
<div class="a" style="left:91.0px;top:49.0px;width:1203px;height:24px;background:#282828;"></div>
<div class="a" style="left:0.0px;top:73.0px;width:1294px;height:1px;background:#555555;"></div>
<div class="a" style="left:4.0px;top:50.0px;width:75px;height:22px;background:#3c3c3c;border-radius:11px"></div>
<svg class="a" style="left:12.0px;top:55.0px" width="12" height="12" viewBox="0 0 12 12"><circle cx="4.8" cy="4.8" r="3.6" stroke="#c7c7c7" stroke-width="1.3" fill="none"/><path d="M7.5 7.5L11 11" stroke="#c7c7c7" stroke-width="1.4"/></svg>
<div class="t" style="left:34.0px;top:55.4px;font-size:10px;color:#e3e3e3;font-weight:700;line-height:normal;letter-spacing:0.800px;">(.*)</div>
<div class="t" style="left:55.5px;top:55.4px;font-size:10px;color:#e3e3e3;font-weight:700;line-height:normal;letter-spacing:-0.200px;">Aa</div>
<div class="t" style="left:87.5px;top:55.4px;font-size:10px;color:#e3e3e3;font-weight:700;line-height:normal;">(</div>
<div class="a" style="left:95.0px;top:52.0px;width:172px;height:18px;background:#3c3c3c;border-radius:9px"></div>
<svg class="a" style="left:104.5px;top:55.5px" width="11" height="11" viewBox="0 0 11 11"><path d="M1 1H10L6.5 5.5V10L4.5 9V5.5Z" stroke="#c7c7c7" stroke-width="1.2" fill="none" stroke-linejoin="round"/></svg>
<div class="t" style="left:121.0px;top:54.6px;font-size:11.5px;color:#c7c7c7;font-weight:400;line-height:normal;letter-spacing:0.000px;">Filter</div>
<svg class="a" style="left:277.0px;top:56.0px" width="11" height="11" viewBox="0 0 11 11"><rect x="0.6" y="0.6" width="9.8" height="9.8" rx="1.5" stroke="#9aa0a6" stroke-width="1.2" fill="none"/></svg>
<div class="t" style="left:293.7px;top:54.6px;font-size:11.5px;color:#e3e3e3;font-weight:400;line-height:normal;letter-spacing:0.080px;">Invert</div>
<div class="a" style="left:332.0px;top:54.0px;width:1px;height:14px;background:#5e5e5e;"></div>
<div class="t" style="left:343.8px;top:54.6px;font-size:11.5px;color:#e3e3e3;font-weight:400;line-height:normal;letter-spacing:0.182px;">More filters</div>
<svg class="a" style="left:407.4px;top:60.2px" width="7" height="5" viewBox="0 0 7 5"><path d="M0 0H7L3.5 5Z" fill="#c7c7c7"/></svg>
<div class="a" style="left:424px;top:52.2px;width:24px;height:17.4px;border-radius:6px;border:1px solid #6f6f6f;color:#e3e3e3;font-size:10.5px;-webkit-text-stroke:0.35px #e3e3e3;text-align:center;line-height:16px">All</div>
<div class="a" style="left:456px;top:52.2px;width:61px;height:17.4px;border-radius:6px;background:#084d78;color:#e3e3e3;font-size:10.5px;-webkit-text-stroke:0.35px #e3e3e3;text-align:center;line-height:18px">Fetch/XHR</div>
<div class="a" style="left:519px;top:52.2px;width:31px;height:17.4px;border-radius:6px;border:1px solid #6f6f6f;color:#e3e3e3;font-size:10.5px;-webkit-text-stroke:0.35px #e3e3e3;text-align:center;line-height:16px">Doc</div>
<div class="a" style="left:552px;top:52.2px;width:29px;height:17.4px;border-radius:6px;border:1px solid #6f6f6f;color:#e3e3e3;font-size:10.5px;-webkit-text-stroke:0.35px #e3e3e3;text-align:center;line-height:16px">CSS</div>
<div class="a" style="left:583px;top:52.2px;width:22px;height:17.4px;border-radius:6px;border:1px solid #6f6f6f;color:#e3e3e3;font-size:10.5px;-webkit-text-stroke:0.35px #e3e3e3;text-align:center;line-height:16px">JS</div>
<div class="a" style="left:607px;top:52.2px;width:34px;height:17.4px;border-radius:6px;border:1px solid #6f6f6f;color:#e3e3e3;font-size:10.5px;-webkit-text-stroke:0.35px #e3e3e3;text-align:center;line-height:16px">Font</div>
<div class="a" style="left:644px;top:52.2px;width:29px;height:17.4px;border-radius:6px;border:1px solid #6f6f6f;color:#e3e3e3;font-size:10.5px;-webkit-text-stroke:0.35px #e3e3e3;text-align:center;line-height:16px">Img</div>
<div class="a" style="left:675px;top:52.2px;width:40px;height:17.4px;border-radius:6px;border:1px solid #6f6f6f;color:#e3e3e3;font-size:10.5px;-webkit-text-stroke:0.35px #e3e3e3;text-align:center;line-height:16px">Media</div>
<div class="a" style="left:717px;top:52.2px;width:53px;height:17.4px;border-radius:6px;border:1px solid #6f6f6f;color:#e3e3e3;font-size:10.5px;-webkit-text-stroke:0.35px #e3e3e3;text-align:center;line-height:16px">Manifest</div>
<div class="a" style="left:772px;top:52.2px;width:27px;height:17.4px;border-radius:6px;border:1px solid #6f6f6f;color:#e3e3e3;font-size:10.5px;-webkit-text-stroke:0.35px #e3e3e3;text-align:center;line-height:16px">WS</div>
<div class="a" style="left:802px;top:52.2px;width:40px;height:17.4px;border-radius:6px;border:1px solid #6f6f6f;color:#e3e3e3;font-size:10.5px;-webkit-text-stroke:0.35px #e3e3e3;text-align:center;line-height:16px">Wasm</div>
<div class="a" style="left:844px;top:52.2px;width:38px;height:17.4px;border-radius:6px;border:1px solid #6f6f6f;color:#e3e3e3;font-size:10.5px;-webkit-text-stroke:0.35px #e3e3e3;text-align:center;line-height:16px">Other</div>
<div class="a" style="left:452.0px;top:54.0px;width:1px;height:14px;background:#5e5e5e;"></div>
<div class="a" style="left:91.0px;top:74.0px;width:1203px;height:300px;background:#282828;"></div>
<div class="a" style="left:91.0px;top:74.0px;width:1203px;height:23px;background:#28292c;"></div>
<div class="a" style="left:91.0px;top:97.0px;width:1203px;height:1px;background:#555555;"></div>
<div class="t" style="left:95.7px;top:80.2px;font-size:11px;color:#e3e3e3;font-weight:400;line-height:normal;">Name</div>
<div class="t" style="left:542.2px;top:80.2px;font-size:11px;color:#e3e3e3;font-weight:400;line-height:normal;">Status</div>
<div class="t" style="left:675.4px;top:80.2px;font-size:11px;color:#e3e3e3;font-weight:400;line-height:normal;">Type</div>
<div class="t" style="left:808.8px;top:80.2px;font-size:11px;color:#e3e3e3;font-weight:400;line-height:normal;">Initiator</div>
<div class="t" style="left:1032.2px;top:80.2px;font-size:11px;color:#e3e3e3;font-weight:400;line-height:normal;">Size</div>
<div class="t" style="left:1165.2px;top:80.2px;font-size:11px;color:#e3e3e3;font-weight:400;line-height:normal;">Time</div>
<div class="a" style="left:91px;top:98.00px;width:1203px;height:18.85px;background:#28292c"></div>
<svg class="a" style="left:96.0px;top:101.5px" width="12" height="12" viewBox="0 0 12 12"><path d="M3.5 1H2.6C2 1 1.8 1.4 1.8 2V4.6C1.8 5.3 1.4 5.8 0.7 6C1.4 6.2 1.8 6.7 1.8 7.4V10C1.8 10.6 2 11 2.6 11H3.5M8.5 1H9.4C10 1 10.2 1.4 10.2 2V4.6C10.2 5.3 10.6 5.8 11.3 6C10.6 6.2 10.2 6.7 10.2 7.4V10C10.2 10.6 10 11 9.4 11H8.5" stroke="#ee9a67" stroke-width="1.1" fill="none"/><circle cx="6" cy="4.2" r="0.85" fill="#ee9a67"/><path d="M6.2 6.8V8.2L5.4 9.3" stroke="#ee9a67" stroke-width="1.1" fill="none"/></svg>
<div class="t" style="left:112.0px;top:102.0px;font-size:11px;color:#e3e3e3;font-weight:400;line-height:normal;">gen_204?csp_test=true</div>
<div class="t" style="left:541.5px;top:102.0px;font-size:11px;color:#e3e3e3;font-weight:400;line-height:normal;">200</div>
<div class="t" style="left:674.7px;top:102.0px;font-size:11px;color:#e3e3e3;font-weight:400;line-height:normal;">xhr</div>
<div class="t" style="left:808.8px;top:102.0px;font-size:11px;color:#d0d0d0;text-decoration:underline;width:218.5px;overflow:hidden;letter-spacing:-0.47px;">js?key=AIzaSyBoOOEwi3a-FyTlgx2LAWJ0_jcWq2JkR2I</div>
<div class="t" style="left:1027.5px;top:102.0px;width:129.0px;text-align:right;font-size:11px;color:#e3e3e3">89 B</div>
<div class="t" style="left:1160.5px;top:102.0px;width:129.8px;text-align:right;font-size:11px;color:#e3e3e3">85 ms</div>
<div class="a" style="left:91px;top:116.85px;width:1203px;height:18.85px;background:#1f1f1f"></div>
<svg class="a" style="left:96.0px;top:120.4px" width="12" height="12" viewBox="0 0 12 12"><circle cx="6" cy="6" r="6" fill="#e46962"/><path d="M3.8 3.8L8.2 8.2M8.2 3.8L3.8 8.2" stroke="#1f1f1f" stroke-width="1.4"/></svg>
<div class="t" style="left:112.0px;top:120.9px;font-size:11px;color:#f5958c;font-weight:400;line-height:normal;">fetch-all-countries</div>
<div class="t" style="left:541.5px;top:120.9px;font-size:11px;color:#f5958c;font-weight:400;line-height:normal;">500</div>
<div class="t" style="left:674.7px;top:120.9px;font-size:11px;color:#f5958c;font-weight:400;line-height:normal;">xhr</div>
<div class="t" style="left:808.8px;top:120.9px;font-size:11px;color:#f5958c;text-decoration:underline;width:218.5px;overflow:hidden;">landingPage.tsx:115</div>
<div class="t" style="left:1027.5px;top:120.9px;width:129.0px;text-align:right;font-size:11px;color:#f5958c">441 B</div>
<div class="t" style="left:1160.5px;top:120.9px;width:129.8px;text-align:right;font-size:11px;color:#f5958c">2.49 s</div>
<div class="a" style="left:91px;top:135.70px;width:1203px;height:18.85px;background:#28292c"></div>
<svg class="a" style="left:96.0px;top:139.2px" width="12" height="12" viewBox="0 0 12 12"><path d="M3.5 1H2.6C2 1 1.8 1.4 1.8 2V4.6C1.8 5.3 1.4 5.8 0.7 6C1.4 6.2 1.8 6.7 1.8 7.4V10C1.8 10.6 2 11 2.6 11H3.5M8.5 1H9.4C10 1 10.2 1.4 10.2 2V4.6C10.2 5.3 10.6 5.8 11.3 6C10.6 6.2 10.2 6.7 10.2 7.4V10C10.2 10.6 10 11 9.4 11H8.5" stroke="#ee9a67" stroke-width="1.1" fill="none"/><circle cx="6" cy="4.2" r="0.85" fill="#ee9a67"/><path d="M6.2 6.8V8.2L5.4 9.3" stroke="#ee9a67" stroke-width="1.1" fill="none"/></svg>
<div class="t" style="left:112.0px;top:139.7px;font-size:11px;color:#e3e3e3;font-weight:400;line-height:normal;">get-top-countries</div>
<div class="t" style="left:541.5px;top:139.7px;font-size:11px;color:#e3e3e3;font-weight:400;line-height:normal;">200</div>
<div class="t" style="left:674.7px;top:139.7px;font-size:11px;color:#e3e3e3;font-weight:400;line-height:normal;">xhr</div>
<div class="t" style="left:808.8px;top:139.7px;font-size:11px;color:#d0d0d0;text-decoration:underline;width:218.5px;overflow:hidden;">landingPage.tsx:126</div>
<div class="t" style="left:1027.5px;top:139.7px;width:129.0px;text-align:right;font-size:11px;color:#e3e3e3">604 B</div>
<div class="t" style="left:1160.5px;top:139.7px;width:129.8px;text-align:right;font-size:11px;color:#e3e3e3">2.38 s</div>
<div class="a" style="left:91px;top:154.55px;width:1203px;height:18.85px;background:#1f1f1f"></div>
<svg class="a" style="left:96.0px;top:158.1px" width="12" height="12" viewBox="0 0 12 12"><circle cx="6" cy="6" r="6" fill="#e46962"/><path d="M3.8 3.8L8.2 8.2M8.2 3.8L3.8 8.2" stroke="#1f1f1f" stroke-width="1.4"/></svg>
<div class="t" style="left:112.0px;top:158.6px;font-size:11px;color:#f5958c;font-weight:400;line-height:normal;">home-page-data-listing?filter_data=true&amp;type=&amp;sear…max_price=&amp;page=1&amp;countr…</div>
<div class="t" style="left:541.5px;top:158.6px;font-size:11px;color:#f5958c;font-weight:400;line-height:normal;">500</div>
<div class="t" style="left:674.7px;top:158.6px;font-size:11px;color:#f5958c;font-weight:400;line-height:normal;">xhr</div>
<div class="t" style="left:808.8px;top:158.6px;font-size:11px;color:#f5958c;text-decoration:underline;width:218.5px;overflow:hidden;">newLandingListing.tsx:33</div>
<div class="t" style="left:1027.5px;top:158.6px;width:129.0px;text-align:right;font-size:11px;color:#f5958c">453 B</div>
<div class="t" style="left:1160.5px;top:158.6px;width:129.8px;text-align:right;font-size:11px;color:#f5958c">3.49 s</div>
<div class="a" style="left:91px;top:173.40px;width:1203px;height:18.85px;background:#28292c"></div>
<svg class="a" style="left:96.0px;top:176.9px" width="12" height="12" viewBox="0 0 12 12"><circle cx="6" cy="6" r="6" fill="#e46962"/><path d="M3.8 3.8L8.2 8.2M8.2 3.8L3.8 8.2" stroke="#1f1f1f" stroke-width="1.4"/></svg>
<div class="t" style="left:112.0px;top:177.4px;font-size:11px;color:#f5958c;font-weight:400;line-height:normal;">home-page-data-listing?filter_data=true&amp;search_dat…max_price=&amp;page=1&amp;countr…</div>
<div class="t" style="left:541.5px;top:177.4px;font-size:11px;color:#f5958c;font-weight:400;line-height:normal;">500</div>
<div class="t" style="left:674.7px;top:177.4px;font-size:11px;color:#f5958c;font-weight:400;line-height:normal;">xhr</div>
<div class="t" style="left:808.8px;top:177.4px;font-size:11px;color:#f5958c;text-decoration:underline;width:218.5px;overflow:hidden;">newLandingListing.tsx:33</div>
<div class="t" style="left:1027.5px;top:177.4px;width:129.0px;text-align:right;font-size:11px;color:#f5958c">453 B</div>
<div class="t" style="left:1160.5px;top:177.4px;width:129.8px;text-align:right;font-size:11px;color:#f5958c">3.70 s</div>
<div class="a" style="left:91px;top:192.25px;width:1203px;height:18.85px;background:#1f1f1f"></div>
<svg class="a" style="left:96.0px;top:195.8px" width="12" height="12" viewBox="0 0 12 12"><path d="M3.5 1H2.6C2 1 1.8 1.4 1.8 2V4.6C1.8 5.3 1.4 5.8 0.7 6C1.4 6.2 1.8 6.7 1.8 7.4V10C1.8 10.6 2 11 2.6 11H3.5M8.5 1H9.4C10 1 10.2 1.4 10.2 2V4.6C10.2 5.3 10.6 5.8 11.3 6C10.6 6.2 10.2 6.7 10.2 7.4V10C10.2 10.6 10 11 9.4 11H8.5" stroke="#ee9a67" stroke-width="1.1" fill="none"/><circle cx="6" cy="4.2" r="0.85" fill="#ee9a67"/><path d="M6.2 6.8V8.2L5.4 9.3" stroke="#ee9a67" stroke-width="1.1" fill="none"/></svg>
<div class="t" style="left:112.0px;top:196.3px;font-size:11px;color:#e3e3e3;font-weight:400;line-height:normal;">get-currency-listing?page_per_data=10&amp;page=1</div>
<div class="t" style="left:541.5px;top:196.3px;font-size:11px;color:#e3e3e3;font-weight:400;line-height:normal;">200</div>
<div class="t" style="left:674.7px;top:196.3px;font-size:11px;color:#e3e3e3;font-weight:400;line-height:normal;">xhr</div>
<div class="t" style="left:808.8px;top:196.3px;font-size:11px;color:#d0d0d0;text-decoration:underline;width:218.5px;overflow:hidden;">getCurrencyListingUser.ts:12</div>
<div class="t" style="left:1027.5px;top:196.3px;width:129.0px;text-align:right;font-size:11px;color:#e3e3e3">794 B</div>
<div class="t" style="left:1160.5px;top:196.3px;width:129.8px;text-align:right;font-size:11px;color:#e3e3e3">1.04 s</div>
<div class="a" style="left:91px;top:211.10px;width:1203px;height:18.85px;background:#28292c"></div>
<svg class="a" style="left:96.0px;top:214.6px" width="12" height="12" viewBox="0 0 12 12"><rect x="0.7" y="0.7" width="10.6" height="10.6" rx="1.2" stroke="#ee9a67" stroke-width="1.2" fill="none"/><path d="M4.8 3.8L2.6 6L4.8 8.2ZM7.2 3.8L9.4 6L7.2 8.2Z" fill="#ee9a67" stroke="#ee9a67" stroke-width="0.6"/><path d="M6 2.5V9.5" stroke="#ee9a67" stroke-width="0.8"/></svg>
<div class="t" style="left:112.0px;top:215.1px;font-size:11px;color:#e3e3e3;font-weight:400;line-height:normal;">vendors~main.chunk.js</div>
<div class="t" style="left:541.5px;top:215.1px;font-size:11px;color:#e3e3e3;font-weight:400;line-height:normal;">200</div>
<div class="t" style="left:674.7px;top:215.1px;font-size:11px;color:#e3e3e3;font-weight:400;line-height:normal;">fetch</div>
<div class="t" style="left:808.8px;top:215.1px;font-size:11px;color:#d0d0d0;text-decoration:underline;width:218.5px;overflow:hidden;">bootstrap:853</div>
<div class="t" style="left:1027.5px;top:215.1px;width:129.0px;text-align:right;font-size:11px;color:#e3e3e3">3.8 MB</div>
<div class="t" style="left:1160.5px;top:215.1px;width:129.8px;text-align:right;font-size:11px;color:#e3e3e3">824 ms</div>
<div class="a" style="left:91px;top:229.95px;width:1203px;height:18.85px;background:#1f1f1f"></div>
<svg class="a" style="left:96.0px;top:233.5px" width="12" height="12" viewBox="0 0 12 12"><path d="M3.5 1H2.6C2 1 1.8 1.4 1.8 2V4.6C1.8 5.3 1.4 5.8 0.7 6C1.4 6.2 1.8 6.7 1.8 7.4V10C1.8 10.6 2 11 2.6 11H3.5M8.5 1H9.4C10 1 10.2 1.4 10.2 2V4.6C10.2 5.3 10.6 5.8 11.3 6C10.6 6.2 10.2 6.7 10.2 7.4V10C10.2 10.6 10 11 9.4 11H8.5" stroke="#ee9a67" stroke-width="1.1" fill="none"/><circle cx="6" cy="4.2" r="0.85" fill="#ee9a67"/><path d="M6.2 6.8V8.2L5.4 9.3" stroke="#ee9a67" stroke-width="1.1" fill="none"/></svg>
<div class="t" style="left:112.0px;top:234.0px;font-size:11px;color:#e3e3e3;font-weight:400;line-height:normal;">vendors~main.chunk.js.map</div>
<div class="t" style="left:541.5px;top:234.0px;font-size:11px;color:#e3e3e3;font-weight:400;line-height:normal;">200</div>
<div class="t" style="left:674.7px;top:234.0px;font-size:11px;color:#e3e3e3;font-weight:400;line-height:normal;">fetch</div>
<div class="t" style="left:808.8px;top:234.0px;font-size:11px;color:#d0d0d0;text-decoration:underline;width:218.5px;overflow:hidden;">bootstrap:853</div>
<div class="t" style="left:1027.5px;top:234.0px;width:129.0px;text-align:right;font-size:11px;color:#e3e3e3">3.5 MB</div>
<div class="t" style="left:1160.5px;top:234.0px;width:129.8px;text-align:right;font-size:11px;color:#e3e3e3">743 ms</div>
<div class="a" style="left:537.0px;top:74.0px;width:1px;height:300px;background:#555555;"></div>
<div class="a" style="left:670.2px;top:74.0px;width:1px;height:300px;background:#555555;"></div>
<div class="a" style="left:803.6px;top:74.0px;width:1px;height:300px;background:#555555;"></div>
<div class="a" style="left:1027.0px;top:74.0px;width:1px;height:300px;background:#555555;"></div>
<div class="a" style="left:1160.0px;top:74.0px;width:1px;height:300px;background:#555555;"></div>
<div class="a" style="left:91.0px;top:374.0px;width:1203px;height:1px;background:#555555;"></div>
<div class="a" style="left:0.0px;top:366.0px;width:90px;height:1px;background:#555555;"></div>
<div class="a" style="left:0.0px;top:383.0px;width:90px;height:15px;background:#3c3c3c;"></div>
<svg class="a" style="left:3.0px;top:386.5px" width="8" height="8" viewBox="0 0 8 8"><path d="M6 0.5V7.5L1.5 4Z" fill="#6a6a6a"/></svg>
<div class="a" style="left:15.0px;top:385.0px;width:40px;height:11px;background:#6a6a6a;"></div>
<svg class="a" style="left:79.0px;top:387.0px" width="8" height="8" viewBox="0 0 8 8"><path d="M2 0.5V7.5L6.5 4Z" fill="#e3e3e3"/></svg>
<div class="a" style="left:91.0px;top:375.0px;width:1203px;height:24px;background:#282828;"></div>
<div class="t" style="left:100.0px;top:381.0px;font-size:11px;color:#e3e3e3;font-weight:400;line-height:normal;letter-spacing:-0.071px;">8 / 58 requests</div>
<div class="a" style="left:181.0px;top:381.0px;width:1px;height:13px;background:#5e5e5e;"></div>
<div class="t" style="left:190.2px;top:381.0px;font-size:11px;color:#e3e3e3;font-weight:400;line-height:normal;letter-spacing:-0.037px;">7.3 MB / 20.3 MB transferred</div>
<div class="a" style="left:339.0px;top:381.0px;width:1px;height:13px;background:#5e5e5e;"></div>
<div class="t" style="left:347.7px;top:381.0px;font-size:11px;color:#e3e3e3;font-weight:400;line-height:normal;letter-spacing:-0.146px;">40.9 MB / 54.7 MB resources</div>
<div class="a" style="left:0.0px;top:399.0px;width:1294px;height:25px;background:#3c3c3c;"></div>
<div class="a" style="left:0.0px;top:399.0px;width:1294px;height:1px;background:#555555;"></div>
<svg class="a" style="left:11.0px;top:405.0px" width="6" height="14" viewBox="0 0 6 14"><circle cx="3" cy="2.4" r="1.15" fill="#c7c7c7"/><circle cx="3" cy="6.8" r="1.15" fill="#c7c7c7"/><circle cx="3" cy="11.2" r="1.15" fill="#c7c7c7"/></svg>
<div class="t" style="left:33.8px;top:404.6px;font-size:11px;color:#e3e3e3;font-weight:400;line-height:normal;letter-spacing:-0.333px;">Console</div>
<div class="t" style="left:90.7px;top:404.6px;font-size:11px;color:#e3e3e3;font-weight:400;line-height:normal;letter-spacing:-0.350px;">AI assistance</div>
<svg class="a" style="left:157.5px;top:405.5px" width="11" height="11.5" viewBox="0 0 11 11.5"><path d="M3.5 0.8H7.5M4 0.8V4.5L0.9 10.5H10.1L7 4.5V0.8" stroke="#c7c7c7" stroke-width="1.1" fill="none" stroke-linejoin="round"/></svg>
<div class="t" style="left:202.7px;top:404.6px;font-size:11px;color:#82b1f9;font-weight:400;line-height:normal;letter-spacing:-0.022px;">What's new</div>
<svg class="a" style="left:268.0px;top:407.5px" width="8" height="8" viewBox="0 0 8 8"><path d="M0.8 0.8L7.2 7.2M7.2 0.8L0.8 7.2" stroke="#c7c7c7" stroke-width="1.2"/></svg>
<div class="a" style="left:0.0px;top:423.0px;width:1294px;height:1px;background:#4f4f4f;"></div>
<div class="a" style="left:194.0px;top:422.0px;width:88px;height:2px;background:#82b1f9;"></div>
<div class="t" style="left:291.0px;top:404.6px;font-size:11px;color:#e3e3e3;font-weight:400;line-height:normal;letter-spacing:0.217px;">Network request blocking</div>
<div class="t" style="left:449.2px;top:404.6px;font-size:11px;color:#e3e3e3;font-weight:400;line-height:normal;letter-spacing:-0.320px;">Issues</div>
<div class="t" style="left:510.7px;top:404.6px;font-size:11px;color:#e3e3e3;font-weight:400;line-height:normal;letter-spacing:0.457px;">Autofill</div>
<svg class="a" style="left:1274.0px;top:406.0px" width="12" height="12" viewBox="0 0 12 12"><path d="M1.5 1.5L10.5 10.5M10.5 1.5L1.5 10.5" stroke="#c7c7c7" stroke-width="1.3"/></svg>
</div>
</body></html>
